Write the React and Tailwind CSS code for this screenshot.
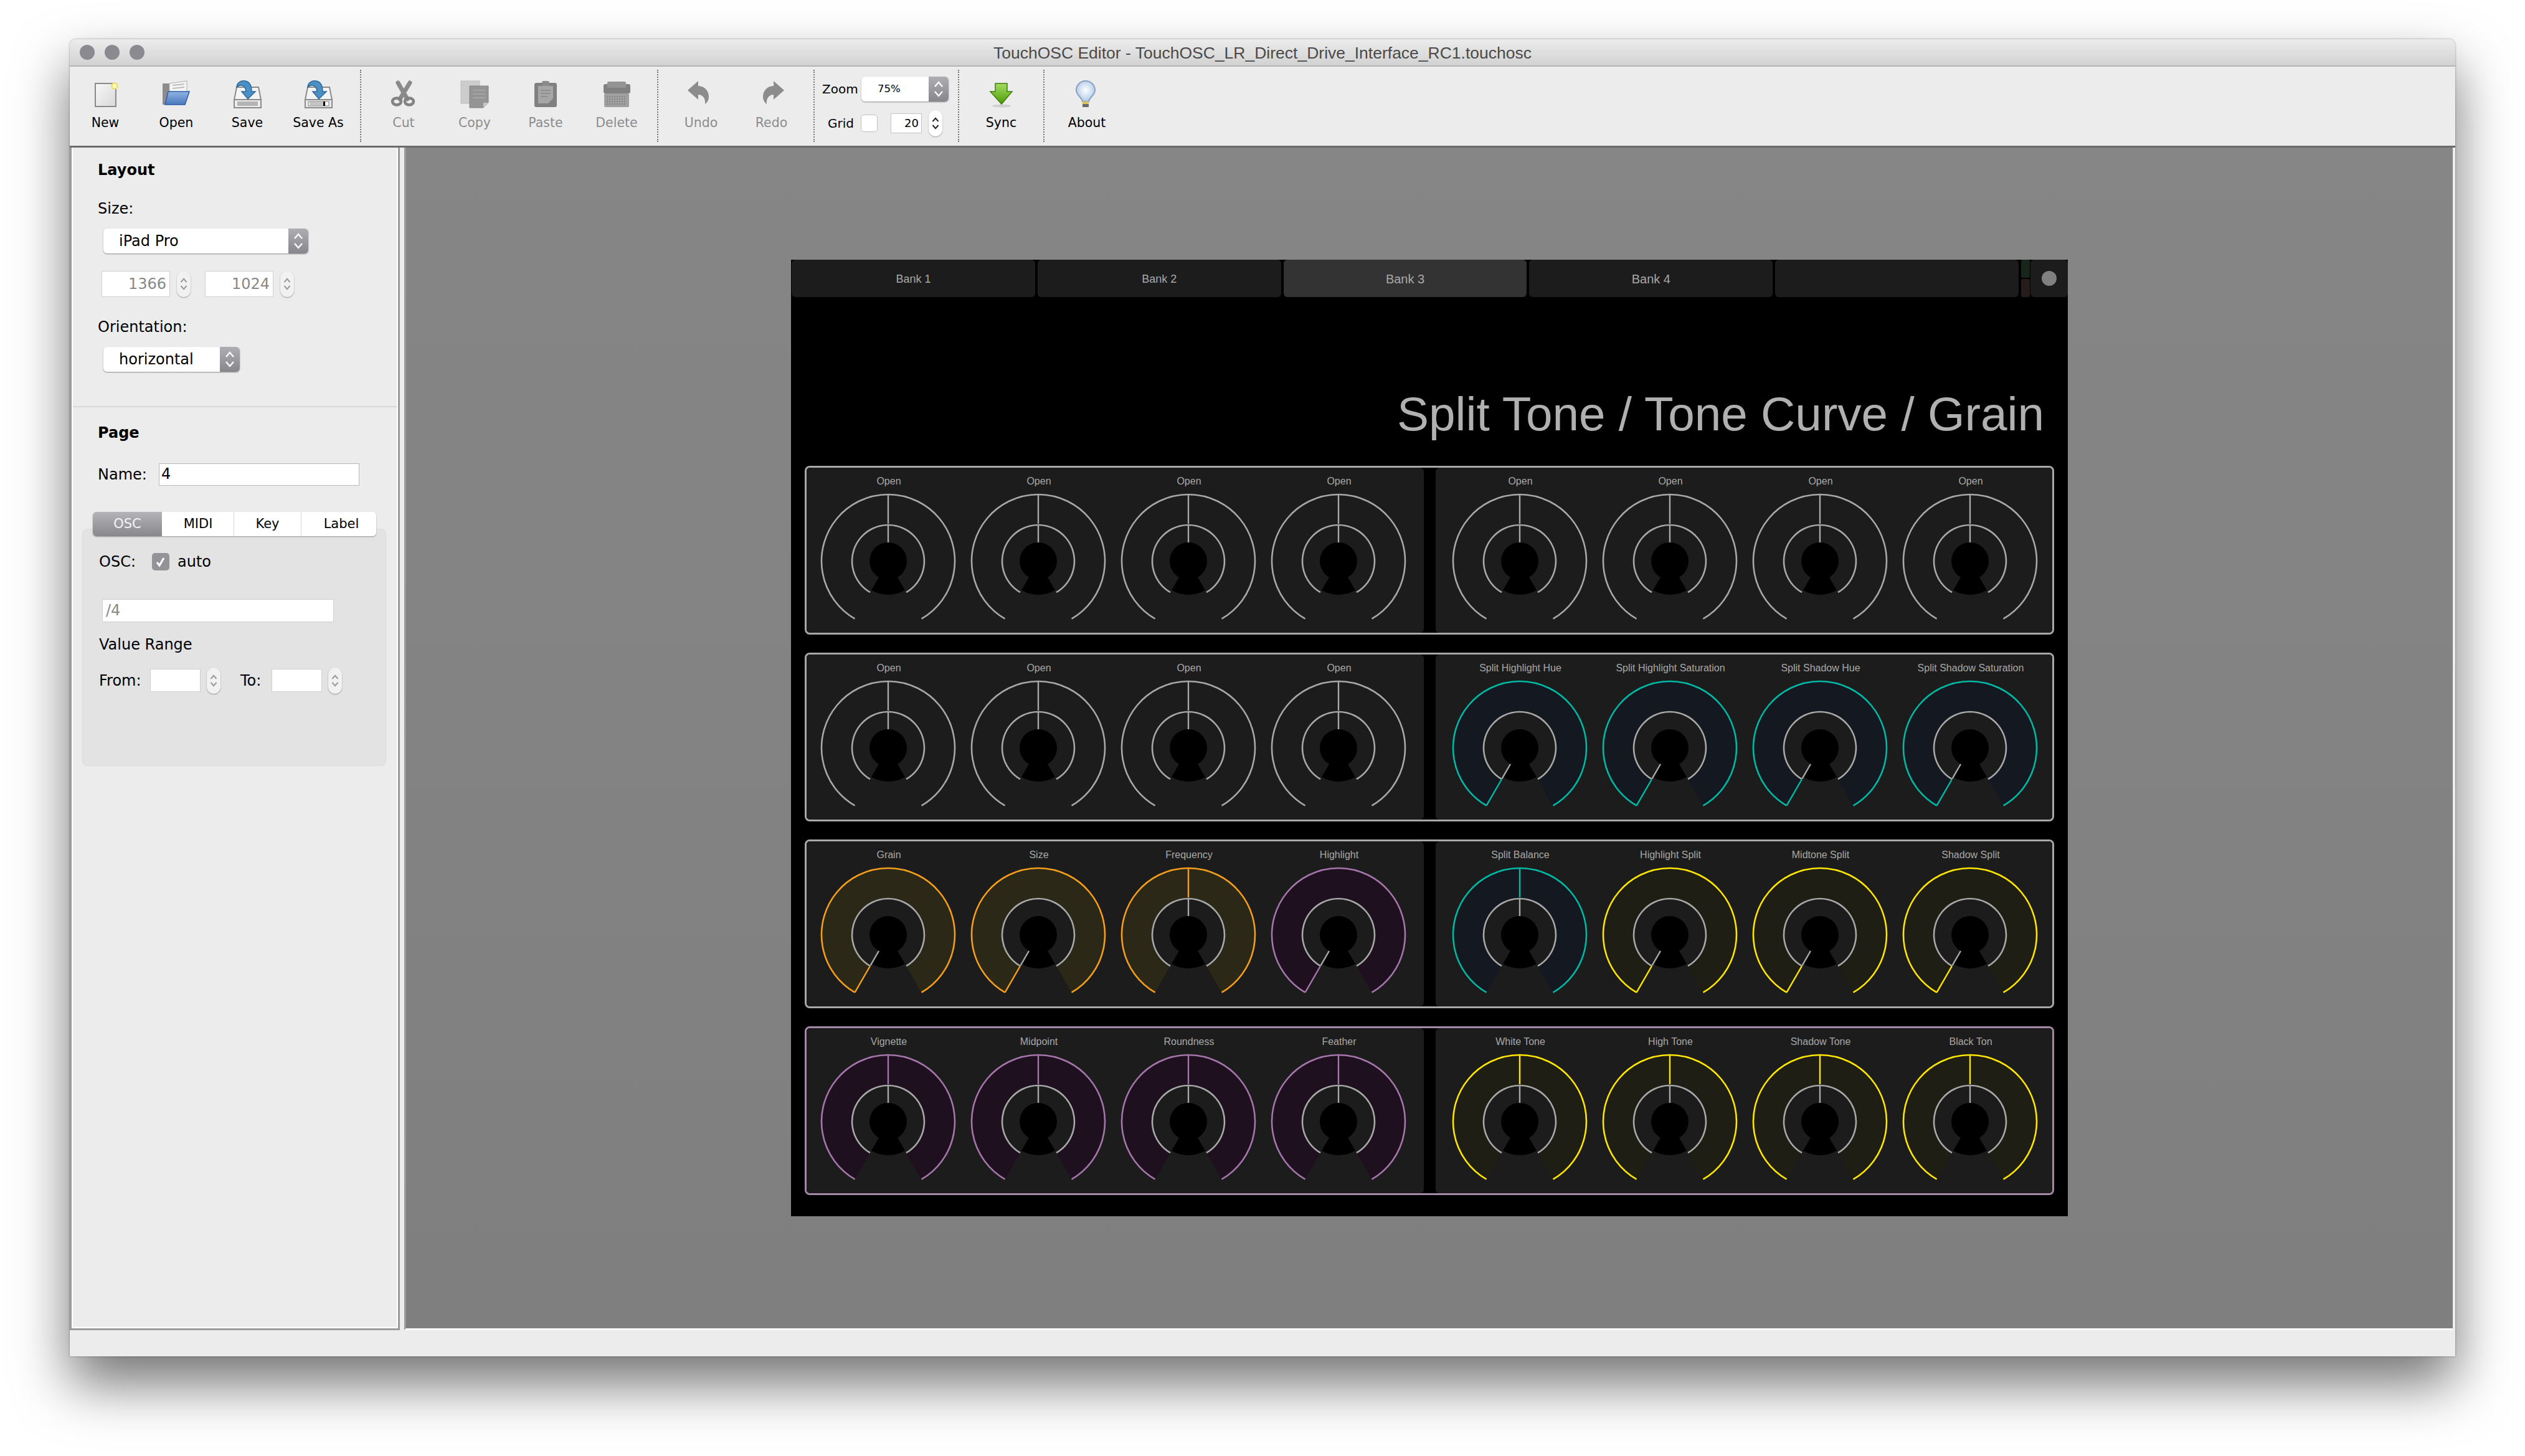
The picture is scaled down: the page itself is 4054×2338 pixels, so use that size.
import React from "react";

const KNOB_ROWS = [
  {
    frame: "border-[#a8a8a8]",
    knobs: [
      ["Open"], ["Open"], ["Open"], ["Open"],
      ["Open"], ["Open"], ["Open"], ["Open"],
    ],
  },
  {
    frame: "border-[#a8a8a8]",
    knobs: [
      ["Open"], ["Open"], ["Open"], ["Open"],
      ["Split Highlight Hue", "teal", -150],
      ["Split Highlight Saturation", "teal", -150],
      ["Split Shadow Hue", "teal", -150],
      ["Split Shadow Saturation", "teal", -150],
    ],
  },
  {
    frame: "border-[#a8a8a8]",
    knobs: [
      ["Grain", "orange", -150],
      ["Size", "orange", -150],
      ["Frequency", "orange", 0],
      ["Highlight", "purple", -150],
      ["Split Balance", "teal", 0],
      ["Highlight Split", "yellow", -150],
      ["Midtone Split", "yellow", -150],
      ["Shadow Split", "yellow", -150],
    ],
  },
  {
    frame: "border-[#a688a9]",
    knobs: [
      ["Vignette", "purple", 0],
      ["Midpoint", "purple", 0],
      ["Roundness", "purple", 0],
      ["Feather", "purple", 0],
      ["White Tone", "yellow", 0],
      ["High Tone", "yellow", 0],
      ["Shadow Tone", "yellow", 0],
      ["Black Ton", "yellow", 0],
    ],
  },
];

const ACCENTS = {
  teal: { line: "#00b9a4", fill: "#141820" },
  orange: { line: "#f59e1b", fill: "#2c2818" },
  yellow: { line: "#ffe600", fill: "#1f1e14" },
  purple: { line: "#a575ab", fill: "#1e101e" },
};

// point on a circle, angle measured clockwise from the top
const pt = (r, deg) => {
  const a = (deg * Math.PI) / 180;
  return [110 + r * Math.sin(a), 110 - r * Math.cos(a)];
};

const arc = (r) => {
  const [x0, y0] = pt(r, -150);
  const [x1, y1] = pt(r, 150);
  return `M${x0} ${y0}A${r} ${r} 0 1 1 ${x1} ${y1}`;
};

const band = (r0, r1) => {
  const [a, b] = pt(r1, -150);
  const [c, d] = pt(r1, 150);
  const [e, f] = pt(r0, 150);
  const [g, h] = pt(r0, -150);
  return `M${a} ${b}A${r1} ${r1} 0 1 1 ${c} ${d}L${e} ${f}A${r0} ${r0} 0 1 0 ${g} ${h}Z`;
};

const wedge = (r) => {
  const [a, b] = pt(r, 150);
  const [c, d] = pt(r, 210);
  return `M110 110L${a} ${b}A${r} ${r} 0 0 1 ${c} ${d}Z`;
};

function Knob({ label, accent, angle = 0 }) {
  const colors = ACCENTS[accent];
  const line = colors ? colors.line : "#a8a8a8";
  const [ox0, oy0] = pt(angle === 0 ? 60 : 58, angle);
  const [ox1, oy1] = pt(107, angle);
  const [ix0, iy0] = pt(30, angle);
  const [ix1, iy1] = pt(57, angle);
  return (
    <div className="flex w-[241px] flex-col items-center pt-[12px]">
      <div className="h-[20px] pl-[3px] text-[16px] leading-[20px] text-[#a8a8a8]">{label}</div>
      <svg className="mt-[8px]" width="220" height="220" viewBox="0 0 220 220" fill="none">
        {colors && <path d={band(58, 107)} fill={colors.fill} />}
        <path d={wedge(54)} fill="#000" />
        <circle cx="110" cy="110" r="30" fill="#000" />
        <path d={arc(107)} stroke={line} strokeWidth="2.6" />
        <path d={arc(58)} stroke="#a8a8a8" strokeWidth="2.6" />
        <line x1={ox0} y1={oy0} x2={ox1} y2={oy1} stroke={line} strokeWidth="2.4" />
        <line x1={ix0} y1={iy0} x2={ix1} y2={iy1} stroke="#a8a8a8" strokeWidth="2.4" />
      </svg>
    </div>
  );
}

function KnobRow({ row }) {
  const left = row.knobs.slice(0, 4);
  const right = row.knobs.slice(4);
  const cell = (k, i) => <Knob key={i} label={k[0]} accent={k[1]} angle={k[2] ?? 0} />;
  return (
    <div className={`ml-[22px] flex h-[271px] w-[2006px] gap-[19px] rounded-[8px] border-[3px] ${row.frame}`}>
      <div className="flex w-[991px] rounded-[6px] bg-[#1c1c1c] pl-[10px]">{left.map(cell)}</div>
      <div className="flex w-[990px] rounded-[6px] bg-[#1c1c1c] pl-[14px]">{right.map(cell)}</div>
    </div>
  );
}

function BankTab({ label, active, big }) {
  return (
    <div
      className={`flex h-[60px] w-[391px] items-center justify-center rounded-[6px] pt-[2px] text-[#a8a8a8] ${
        active ? "bg-[#333333]" : "bg-[#1c1c1c]"
      } ${big ? "text-[20px]" : "text-[18px]"}`}
    >
      {label}
    </div>
  );
}

function Device() {
  return (
    <div className="flex h-[1536px] w-[2050px] flex-col bg-black font-['Liberation_Sans',sans-serif]">
      <div className="flex gap-[4px] pl-[1px]">
        <BankTab label="Bank 1" />
        <BankTab label="Bank 2" />
        <BankTab label="Bank 3" active big />
        <BankTab label="Bank 4" big />
        <BankTab label="" />
        <div className="flex flex-col gap-[2px]">
          <div className="h-[29px] w-[14px] rounded-[3px] bg-[#18251b]" />
          <div className="h-[29px] w-[14px] rounded-[3px] bg-[#261c1c]" />
        </div>
        <div className="-ml-[3px] flex h-[60px] w-[60px] items-center justify-center rounded-[6px] bg-[#1c1c1c]">
          <div className="h-[24px] w-[24px] rounded-full bg-[#808080]" />
        </div>
      </div>
      <div className="h-[271px] pr-[38px] pt-[150px] text-right text-[76.5px] leading-[76px] text-[#b0b0b0]">
        Split Tone / Tone Curve / Grain
      </div>
      <div className="flex flex-col gap-[29px]">
        {KNOB_ROWS.map((row, i) => (
          <KnobRow key={i} row={row} />
        ))}
      </div>
    </div>
  );
}

function Chevrons({ color, w = 16, h = 30, sw = 2.4 }) {
  return (
    <svg width={w} height={h} viewBox="0 0 16 30" fill="none" stroke={color} strokeWidth={sw}>
      <path d="M2 11L8 4L14 11" />
      <path d="M2 19L8 26L14 19" />
    </svg>
  );
}

function Select({ label, width, textPad = 25, small }) {
  return (
    <div
      className="flex h-[40px] overflow-hidden rounded-[6px] bg-white shadow-[0_1px_2px_rgba(0,0,0,0.4)]"
      style={{ width }}
    >
      <div
        className={`flex-1 leading-[40px] text-black ${small ? "text-[16.5px]" : "text-[24px]"}`}
        style={{ paddingLeft: textPad }}
      >
        {label}
      </div>
      <div className="flex w-[32px] items-center justify-center bg-gradient-to-b from-[#aeaeb2] to-[#86868c]">
        <Chevrons color="#ffffff" />
      </div>
    </div>
  );
}

function Stepper({ dark, h = 42 }) {
  return (
    <div
      className={`flex w-[22px] items-center justify-center rounded-full shadow-[0_1px_2px_rgba(0,0,0,0.35)] ${
        dark ? "bg-white" : "bg-[#f1f1f1]"
      }`}
      style={{ height: h }}
    >
      <Chevrons color={dark ? "#222222" : "#999999"} w={12} h={28} sw={2.6} />
    </div>
  );
}

function NumberField({ value, width, h = 42, gap = 11 }) {
  return (
    <div className="flex items-center" style={{ gap }}>
      <div
        className="border border-[#d0d0d0] bg-white pr-[5px] text-right text-[24px] text-[#888888]"
        style={{ width, height: h, lineHeight: `${h - 2}px` }}
      >
        {value}
      </div>
      <Stepper />
    </div>
  );
}

function Sep() {
  return <div className="mt-[5px] h-[116px] w-0 border-l-2 border-dotted border-[#777777]" />;
}

function ToolButton({ label, width = 114, disabled, children }) {
  return (
    <div className="flex flex-col items-center" style={{ width }}>
      <svg className="mt-[18px]" width="60" height="50" viewBox="0 0 60 50">
        {children}
      </svg>
      <div
        className={`mt-[9px] whitespace-nowrap text-[20.5px] leading-[26px] ${disabled ? "text-[#8c8c8c]" : "text-black"}`}
      >
        {label}
      </div>
    </div>
  );
}

function DriveIcon({ saveAs }) {
  return (
    <>
      <path d="M13 15H48L52 35H9Z" fill="#f4f4f4" stroke="#8a8a8a" strokeWidth="2" />
      <rect x="9" y="35" width="43" height="13" fill="#ececec" stroke="#8a8a8a" strokeWidth="2" />
      {saveAs ? (
        <>
          <rect x="14" y="38" width="33" height="7" fill="#ffffff" stroke="#777777" />
          <rect x="16" y="39" width="22" height="5" fill="#c4c4c4" />
          <rect x="38" y="38" width="3" height="7" fill="#000000" />
        </>
      ) : (
        <rect x="14" y="38" width="33" height="7" fill="#b4b4b4" />
      )}
      <path
        d="M13 16C13 6 22 3 30 6C35 8 37 14 37 22L43 22L31 34L21 22L28 22C28 16 24 12 20 12C16 12 14 14 13 16Z"
        fill="#4a8fc6"
        stroke="#2f6a9a"
        strokeWidth="1.5"
      />
    </>
  );
}

function Toolbar() {
  return (
    <div className="flex h-[127px] bg-[#ececec] font-['DejaVu_Sans',sans-serif]">
      <div className="flex w-[466px] shrink-0">
        <ToolButton label="New">
          <defs>
            <linearGradient id="newDoc" x1="0" y1="0" x2="1" y2="1">
              <stop offset="0" stopColor="#f8f8f8" />
              <stop offset="1" stopColor="#d8d8d8" />
            </linearGradient>
          </defs>
          <rect x="14" y="9" width="33" height="37" fill="url(#newDoc)" stroke="#8a8a8a" strokeWidth="2" />
          <circle cx="45" cy="13" r="4.5" fill="#fff9c0" stroke="#eadf5c" strokeWidth="2" />
        </ToolButton>
        <ToolButton label="Open">
          <defs>
            <linearGradient id="folderBlue" x1="0" y1="0" x2="0" y2="1">
              <stop offset="0" stopColor="#8fb4e2" />
              <stop offset="1" stopColor="#4a78bd" />
            </linearGradient>
          </defs>
          <rect x="8" y="9" width="14" height="34" fill="#8c8c8c" />
          <path d="M19 9L47 5V24H19Z" fill="#f6f6f6" stroke="#aaaaaa" />
          <path d="M24 12L43 10M24 17L43 15" stroke="#bbbbbb" strokeWidth="2" />
          <path d="M17 22H51L44 43H12Z" fill="url(#folderBlue)" stroke="#2d5ea6" strokeWidth="1.5" />
        </ToolButton>
        <ToolButton label="Save">
          <DriveIcon />
        </ToolButton>
        <ToolButton label="Save As">
          <DriveIcon saveAs />
        </ToolButton>
      </div>
      <Sep />
      <div className="flex w-[475px] shrink-0 pl-[11px]">
        <ToolButton label="Cut" disabled>
          <path d="M21 8L36 34M40 8L24 34" stroke="#8a8a8a" strokeWidth="7" strokeLinecap="round" fill="none" />
          <ellipse cx="19" cy="38" rx="7" ry="5.5" fill="none" stroke="#828282" strokeWidth="4.5" />
          <ellipse cx="39" cy="38" rx="7" ry="5.5" fill="none" stroke="#828282" strokeWidth="4.5" />
        </ToolButton>
        <ToolButton label="Copy" disabled>
          <rect x="8" y="5" width="30" height="36" fill="#cccccc" stroke="#bdbdbd" />
          <path d="M22 13H52V40L44 48H22Z" fill="#949494" stroke="#858585" />
          <path d="M27 20H47M27 26H47M27 32H47" stroke="#aaaaaa" strokeWidth="1.5" />
          <path d="M44 48V40H52Z" fill="#c8c8c8" />
        </ToolButton>
        <ToolButton label="Paste" disabled>
          <rect x="12" y="8" width="36" height="39" rx="3" fill="#808080" />
          <rect x="24" y="5" width="12" height="8" rx="3" fill="#8c8c8c" />
          <path d="M18 13H42V33L34 41H18Z" fill="#a6a6a6" />
          <path d="M22 20H38M22 25H38M22 30H34" stroke="#8a8a8a" strokeWidth="1.5" />
        </ToolButton>
        <ToolButton label="Delete" disabled>
          <rect x="10" y="25" width="40" height="22" rx="2" fill="#a0a0a0" />
          <path d="M14 30H46M14 34H46M14 38H46M14 42H46" stroke="#848484" strokeWidth="2" strokeDasharray="2 2" />
          <rect x="9" y="10" width="43" height="15" rx="3" fill="#808080" />
          <rect x="15" y="6" width="30" height="10" rx="2" fill="#949494" />
        </ToolButton>
      </div>
      <Sep />
      <div className="flex w-[249px] shrink-0 pl-[12px]">
        <ToolButton label="Undo" width={113} disabled>
          <path d="M8 20L25 5V13C36 13 42 22 42 30C42 36 39 40 36 42C37 34 33 27 25 27V35Z" fill="#8c8c8c" />
        </ToolButton>
        <ToolButton label="Redo" width={113} disabled>
          <path d="M50 20L33 5V13C22 13 16 22 16 30C16 36 19 40 22 42C21 34 25 27 33 27V35Z" fill="#8c8c8c" />
        </ToolButton>
      </div>
      <Sep />
      <div className="w-[230px] shrink-0 pl-[12px] text-[20px] text-black">
        <div className="mt-[16px] flex items-center gap-[10px]">
          <span className="w-[53px]">Zoom</span>
          <Select label="75%" width={140} textPad={26} small />
        </div>
        <div className="mt-[14px] flex items-center">
          <span className="ml-[9px] w-[53px]">Grid</span>
          <div className="h-[28px] w-[27px] rounded-[5px] border border-[#c0c0c0] bg-white" />
          <div className="ml-[21px] flex items-center gap-[11px]">
            <div className="h-[32px] w-[50px] border border-[#c4c4c4] bg-white pr-[4px] text-right text-[18px] leading-[30px]">
              20
            </div>
            <Stepper dark />
          </div>
        </div>
      </div>
      <Sep />
      <div className="w-[135px] shrink-0">
        <ToolButton label="Sync" width={135}>
          <defs>
            <linearGradient id="syncGreen" x1="0" y1="0" x2="0" y2="1">
              <stop offset="0" stopColor="#a4dc62" />
              <stop offset="1" stopColor="#4e9a06" />
            </linearGradient>
          </defs>
          <ellipse cx="30" cy="45" rx="15" ry="2.5" fill="#d0d0d0" />
          <path d="M20 9H39V22H47L30 42L12 22H20Z" fill="url(#syncGreen)" stroke="#3f7f08" strokeWidth="1.5" />
        </ToolButton>
      </div>
      <Sep />
      <div className="w-[136px] shrink-0">
        <ToolButton label="About" width={136}>
          <defs>
            <radialGradient id="bulb" cx="0.5" cy="0.45" r="0.6">
              <stop offset="0" stopColor="#ffffff" />
              <stop offset="1" stopColor="#a9c4e6" />
            </radialGradient>
          </defs>
          <path
            d="M28 5C19 5 13 12 13 20C13 28 22 31 23 38H33C34 31 43 28 43 20C43 12 37 5 28 5Z"
            fill="url(#bulb)"
            stroke="#8aa2c2"
            strokeWidth="2"
          />
          <rect x="23" y="38" width="10" height="4" fill="#d9c65a" />
          <rect x="23" y="42" width="10" height="5" fill="#6b6b6b" />
        </ToolButton>
      </div>
    </div>
  );
}

function SidePanel() {
  return (
    <div className="flex h-full w-[530px] shrink-0 flex-col border-[3px] border-t-0 border-[#9a9a9a] font-['DejaVu_Sans',sans-serif] text-[24px] text-black">
      <div className="h-full border-[2px] border-t-0 border-white bg-[#ececec]">
        <div className="pl-[40px]">
          <div className="mt-[21px] h-[30px] font-bold leading-[30px]">Layout</div>
          <div className="mt-[32px] h-[30px] leading-[30px]">Size:</div>
          <div className="ml-[9px] mt-[17px]">
            <Select label="iPad Pro" width={329} />
          </div>
          <div className="ml-[6px] mt-[28px] flex gap-[23px]">
            <NumberField value="1366" width={110} />
            <NumberField value="1024" width={110} />
          </div>
          <div className="mt-[33px] h-[30px] leading-[30px]">Orientation:</div>
          <div className="ml-[9px] mt-[17px]">
            <Select label="horizontal" width={219} />
          </div>
        </div>
        <div className="mt-[55px] h-[2px] bg-[#d8d8d8]" />
        <div className="pl-[40px]">
          <div className="mt-[26px] h-[30px] font-bold leading-[30px]">Page</div>
          <div className="mt-[34px] flex h-[36px] items-center">
            <span className="w-[98px]">Name:</span>
            <div className="h-[36px] w-[322px] border border-[#b8b8b8] bg-white pl-[3px] text-[24px] leading-[32px]">4</div>
          </div>
        </div>
        <div className="ml-[15px] mt-[69px] h-[381px] w-[488px] rounded-[8px] border border-[#dcdcdc] bg-[#e3e3e3]">
          <div className="relative z-10 ml-[16px] -mt-[28px] flex h-[39px] w-[455px] overflow-hidden rounded-[6px] bg-white text-[21px] shadow-[0_1px_2px_rgba(0,0,0,0.35)]">
            <div className="flex w-[111px] items-center justify-center bg-gradient-to-b from-[#b4b4b8] to-[#88888c] text-[#f4f4f4]">
              OSC
            </div>
            <div className="flex w-[116px] items-center justify-center border-r border-[#d8d8d8] pl-[1px]">MIDI</div>
            <div className="flex w-[108px] items-center justify-center border-r border-[#d8d8d8]">Key</div>
            <div className="flex flex-1 items-center justify-center pl-[8px]">Label</div>
          </div>
          <div className="pl-[26px]">
            <div className="mt-[26px] flex h-[30px] items-center">
              <span className="w-[85px]">OSC:</span>
              <div className="flex h-[28px] w-[28px] items-center justify-center rounded-[5px] bg-[#949498]">
                <svg width="20" height="20" viewBox="0 0 20 20" fill="none" stroke="#fff" strokeWidth="3">
                  <path d="M4 11L8 16L15 4" />
                </svg>
              </div>
              <span className="ml-[13px]">auto</span>
            </div>
            <div className="ml-[5px] mt-[45px] h-[37px] w-[372px] border border-[#d0d0d0] bg-white pl-[5px] text-[24px] leading-[35px] text-[#888888]">
              /4
            </div>
            <div className="mt-[21px] h-[30px] leading-[30px]">Value Range</div>
            <div className="mt-[24px] flex h-[37px] items-center">
              <span className="w-[82px]">From:</span>
              <NumberField width={81} h={37} gap={10} />
              <span className="ml-[32px] w-[50px]">To:</span>
              <NumberField width={81} h={37} gap={10} />
            </div>
          </div>
        </div>
      </div>
    </div>
  );
}

export default function App() {
  return (
    <div className="h-[2338px] w-[4054px] overflow-hidden bg-white pl-[112px] pt-[63px]">
      <div className="flex h-[2115px] w-[3830px] flex-col rounded-t-[10px] bg-[#ececec] shadow-[0_44px_88px_rgba(0,0,0,0.55),0_0_3px_rgba(0,0,0,0.4)]">
        <div className="flex h-[44px] shrink-0 items-center rounded-t-[10px] border-b-2 border-[#b4b4b4] bg-gradient-to-b from-[#ececec] to-[#d2d2d2] pl-[16px]">
          <div className="flex gap-[16px]">
            <div className="h-[24px] w-[24px] rounded-full bg-[#8a8a90]" />
            <div className="h-[24px] w-[24px] rounded-full bg-[#8a8a90]" />
            <div className="h-[24px] w-[24px] rounded-full bg-[#8a8a90]" />
          </div>
          <div className="ml-[-120px] flex-1 pt-[4px] text-center font-['Liberation_Sans',sans-serif] text-[26.5px] text-[#4a4a4a]">
            TouchOSC Editor - TouchOSC_LR_Direct_Drive_Interface_RC1.touchosc
          </div>
        </div>
        <Toolbar />
        <div className="flex h-[1902px] shrink-0 border-t-[3px] border-[#6b6b6b]">
          <SidePanel />
          <div className="ml-[7px] mr-[4px] flex flex-1 items-center justify-center border-b-[3px] border-l-[3px] border-b-white border-l-[#9a9a9a] bg-gradient-to-b from-[#868686] to-[#7f7f7f]">
            <Device />
          </div>
        </div>
      </div>
    </div>
  );
}
